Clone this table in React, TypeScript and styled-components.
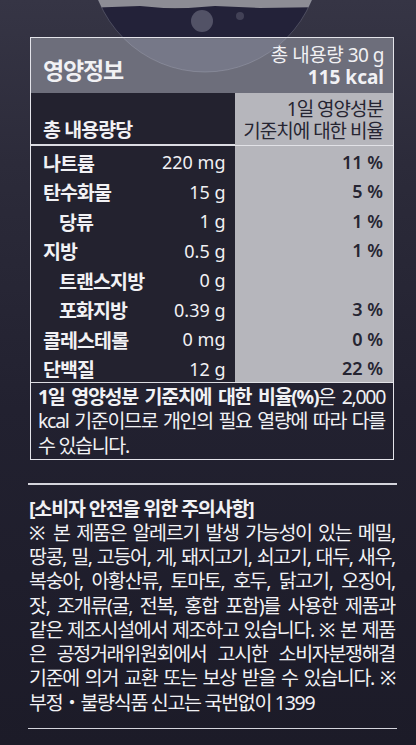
import React from 'react'
import styled, { createGlobalStyle } from 'styled-components'

const GlobalStyle = createGlobalStyle`
	html, body {
		margin: 0;
		padding: 0;
		background: #1d1c2a;
	}
	body {
		font-family: 'Noto Sans', 'Noto Sans CJK KR', sans-serif;
	}
`

const Page = styled.div`
	position: relative;
	width: 416px;
	height: 745px;
	overflow: hidden;
	box-sizing: border-box;
	padding: 37px 22px 0 30px;
	color: #f1f1f4;
	background: linear-gradient(180deg, #363545 0%, #2c2b3a 22%, #222130 55%, #1c1b28 100%);
`

const Moon = styled.svg`
	position: absolute;
	top: 0;
	left: 0;
	pointer-events: none;
`

const Table = styled.div`
	width: 364px;
	box-sizing: border-box;
	border: 1.5px solid #e4e4ea;
`

const TitleRow = styled.div`
	display: flex;
	justify-content: space-between;
	align-items: center;
	height: 54.5px;
	padding: 0 9px 0 12px;
	background: #6d6e7b;
`

const Title = styled.div`
	font-size: 23px;
	font-weight: 700;
	letter-spacing: -1.2px;
	padding-top: 8px;
`

const Total = styled.div`
	text-align: right;
	font-size: 19px;
	line-height: 22px;
	letter-spacing: -0.5px;
	padding-top: 2px;
`

const TotalKcal = styled.div`
	font-weight: 700;
	letter-spacing: 0;
`

const Row = styled.div<{ $h: number }>`
	display: grid;
	grid-template-columns: 203.5px 1fr;
	height: ${(p) => p.$h}px;
`

const Left = styled.div<{ $indent?: boolean; $rule: 'full' | 'indent' | 'none'; $bottom?: boolean }>`
	position: relative;
	display: flex;
	justify-content: space-between;
	align-items: ${(p) => (p.$bottom ? 'flex-end' : 'center')};
	padding: 2px 9px ${(p) => (p.$bottom ? 3 : 0)}px ${(p) => (p.$indent ? 28 : 12)}px;
	background: #23222f;
	&::after {
		content: '';
		display: ${(p) => (p.$rule === 'none' ? 'none' : 'block')};
		position: absolute;
		left: ${(p) => (p.$rule === 'indent' ? 22 : 0)}px;
		right: 0;
		bottom: 0;
		height: 1.5px;
		background: #dcdce2;
	}
`

const Right = styled.div<{ $rule: boolean }>`
	display: flex;
	flex-direction: column;
	justify-content: center;
	align-items: flex-end;
	padding: 2px 10px 0 0;
	background: #b6b6bc;
	color: #262532;
	border-bottom: ${(p) => (p.$rule ? '1.5px solid #e2e2e7' : '0')};
`

const Label = styled.span`
	font-size: 19.5px;
	font-weight: 700;
	letter-spacing: -0.9px;
`

const Amount = styled.span`
	font-size: 18px;
	font-weight: 400;
`

const Percent = styled.span`
	font-size: 18px;
	font-weight: 600;
`

const DvHead = styled.div`
	font-size: 19px;
	line-height: 22px;
	letter-spacing: -1px;
	text-align: right;
`

const Note = styled.div`
	padding: 3px 8px 1px 7px;
	font-size: 19.5px;
	line-height: 24.5px;
	letter-spacing: -1.3px;
	b {
		font-weight: 700;
	}
`

const Line = styled.div<{ $last?: boolean }>`
	text-align: ${(p) => (p.$last ? 'left' : 'justify')};
	text-align-last: ${(p) => (p.$last ? 'left' : 'justify')};
`

const Rule = styled.div`
	height: 1.5px;
	margin: 0 -3px 0 -2px;
	background: #d4d4dc;
`

const Caution = styled.div`
	margin: 12px -1px 13px -1px;
	font-size: 19.5px;
	line-height: 24.25px;
	letter-spacing: -1.3px;
`

const CautionTitle = styled.div`
	font-weight: 700;
	letter-spacing: -1.1px;
`

type Item = { label: string; amount: string; pct?: string; sub?: boolean; rule: 'full' | 'indent' }

const items: Item[] = [
	{ label: '나트륨', amount: '220 mg', pct: '11 %', rule: 'full' },
	{ label: '탄수화물', amount: '15 g', pct: '5 %', rule: 'full' },
	{ label: '당류', amount: '1 g', pct: '1 %', sub: true, rule: 'indent' },
	{ label: '지방', amount: '0.5 g', pct: '1 %', rule: 'full' },
	{ label: '트랜스지방', amount: '0 g', sub: true, rule: 'indent' },
	{ label: '포화지방', amount: '0.39 g', pct: '3 %', sub: true, rule: 'full' },
	{ label: '콜레스테롤', amount: '0 mg', pct: '0 %', rule: 'full' },
	{ label: '단백질', amount: '12 g', pct: '22 %', rule: 'full' },
]

const caution = [
	'※ 본 제품은 알레르기 발생 가능성이 있는 메밀,',
	'땅콩, 밀, 고등어, 게, 돼지고기, 쇠고기, 대두, 새우,',
	'복숭아, 아황산류, 토마토, 호두, 닭고기, 오징어,',
	'잣, 조개류(굴, 전복, 홍합 포함)를 사용한 제품과',
	'같은 제조시설에서 제조하고 있습니다. ※ 본 제품',
	'은 공정거래위원회에서 고시한 소비자분쟁해결',
	'기준에 의거 교환 또는 보상 받을 수 있습니다. ※',
]

const MoonArt = () => (
	<Moon width={416} height={80} viewBox="0 0 416 80">
		<defs>
			<clipPath id="moon">
				<circle cx={205} cy={-43} r={115} />
			</clipPath>
		</defs>
		<g clipPath="url(#moon)">
			<rect x={80} y={-10} width={260} height={18} fill="#8d8d95" />
			<path d="M80 8 L140 6 L175 9 L215 6 L260 8 L340 7 L340 37 L80 37 Z" fill="#232239" />
			<circle cx={202} cy={21} r={11} fill="#5a5a6e" opacity={0.85} />
			<circle cx={240} cy={16} r={4} fill="#4a4a5e" opacity={0.8} />
			<rect x={80} y={38.5} width={260} height={42} fill="rgba(175,185,220,0.14)" />
		</g>
		<circle cx={205} cy={-43} r={115} fill="none" stroke="rgba(210,215,230,0.2)" strokeWidth={1} />
	</Moon>
)

export default function App() {
	return (
		<>
			<GlobalStyle />
			<Page>
				<Table>
					<TitleRow>
						<Title>영양정보</Title>
						<Total>
							<div>총 내용량 30 g</div>
							<TotalKcal>115 kcal</TotalKcal>
						</Total>
					</TitleRow>
					<Row $h={53}>
						<Left $rule="full" $bottom>
							<Label>총 내용량당</Label>
						</Left>
						<Right $rule>
							<DvHead>
								<div>1일 영양성분</div>
								<div>기준치에 대한 비율</div>
							</DvHead>
						</Right>
					</Row>
					{items.map((it) => (
						<Row key={it.label} $h={29.5}>
							<Left $indent={it.sub} $rule={it.rule}>
								<Label>{it.label}</Label>
								<Amount>{it.amount}</Amount>
							</Left>
							<Right $rule>
								<Percent>{it.pct}</Percent>
							</Right>
						</Row>
					))}
					<Note>
						<Line>
							<b>1일 영양성분 기준치에 대한 비율(%)</b>은 2,000
						</Line>
						<Line>kcal 기준이므로 개인의 필요 열량에 따라 다를</Line>
						<Line $last>수 있습니다.</Line>
					</Note>
				</Table>
				<Rule style={{ marginTop: 23 }} />
				<Caution>
					<CautionTitle>[소비자 안전을 위한 주의사항]</CautionTitle>
					{caution.map((t) => (
						<Line key={t}>{t}</Line>
					))}
					<Line $last>부정・불량식품 신고는 국번없이 1399</Line>
				</Caution>
				<Rule />
				<MoonArt />
			</Page>
		</>
	)
}
